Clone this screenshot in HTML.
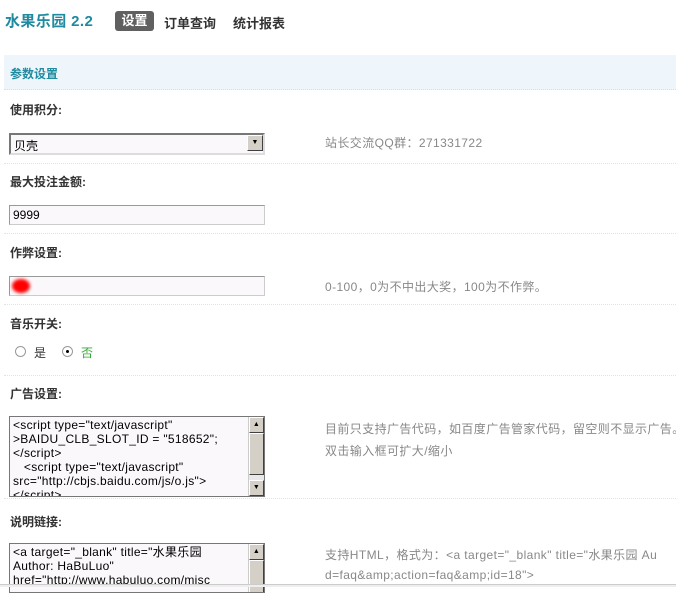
<!DOCTYPE html>
<html><head><meta charset="utf-8"><style>
*{margin:0;padding:0;box-sizing:border-box}
body{width:676px;height:587px;overflow:hidden;background:#fff;font-family:"Liberation Sans","Noto Sans CJK SC",sans-serif;font-size:12px;color:#333;position:relative}
.a{position:absolute;white-space:nowrap}
.lbl{font-weight:bold;font-size:12px;color:#333}
.hint{color:#888;font-size:12px;letter-spacing:0.4px}
.div{position:absolute;left:4px;right:0;height:1px;border-top:1px dotted #d5e6ee}
.inp{position:absolute;left:9px;width:256px;height:20px;border:1px solid #999;border-right-color:#ccc;border-bottom-color:#ccc;background:#fbf8fb;font-size:12px;padding:2px 3px;color:#000}
.ta{position:absolute;left:9px;width:256px;border:1px solid #777;background:#fbf8fb;font-size:12px;line-height:14px;padding:1px 3px;color:#000;overflow:hidden;white-space:nowrap;letter-spacing:0.3px}
.sb{position:absolute;right:0;top:0;bottom:0;width:16px;background:#e8e8e8;border-left:1px solid #ccc}
.btn{position:absolute;left:0;width:15px;height:16px;background:#d4d0c8;border:1px solid;border-color:#fff #404040 #404040 #fff;font-size:7px;text-align:center;line-height:14px;color:#000}
</style></head><body>
<div class="a" style="left:5px;top:10px;font-size:15px;font-weight:bold;color:#1f8aa0;letter-spacing:0.4px">水果乐园 2.2</div>
<div class="a" style="left:115px;top:11px;width:39px;height:20px;background:#606060;border-radius:3px;color:#fff;font-weight:bold;font-size:13px;text-align:center;line-height:20px">设置</div>
<div class="a" style="left:164px;top:13px;font-weight:bold;font-size:13px;color:#333">订单查询</div>
<div class="a" style="left:233px;top:13px;font-weight:bold;font-size:13px;color:#333">统计报表</div>
<div class="a" style="left:4px;top:55px;width:672px;height:35px;background:#eef6fb;border-bottom:1px dotted #cfe0ea"></div>
<div class="a" style="left:10px;top:65px;font-weight:bold;color:#1f8aa0">参数设置</div>

<div class="a lbl" style="left:10px;top:101px">使用积分:</div>
<div class="inp" style="top:133px;height:22px;border:2px solid #777;border-right-color:#ddd;border-bottom-color:#ddd">贝壳<div class="btn" style="left:auto;right:0;top:0;width:16px;height:16px">▼</div></div>
<div class="a hint" style="left:325px;top:134px">站长交流QQ群：271331722</div>
<div class="div" style="top:163px"></div>

<div class="a lbl" style="left:10px;top:173px">最大投注金额:</div>
<div class="inp" style="top:205px">9999</div>
<div class="div" style="top:233px"></div>

<div class="a lbl" style="left:10px;top:244px">作弊设置:</div>
<div class="inp" style="top:276px"><div style="position:absolute;left:2px;top:2px;width:18px;height:14px;border-radius:50%;background:#f00;filter:blur(1.5px)"></div></div>
<div class="a hint" style="left:325px;top:278px">0-100，0为不中出大奖，100为不作弊。</div>
<div class="div" style="top:304px"></div>

<div class="a lbl" style="left:10px;top:315px">音乐开关:</div>
<div class="a" style="left:15px;top:346px;width:11px;height:11px;border-radius:50%;border:1px solid #999;background:#fff"></div>
<div class="a" style="left:34px;top:344px">是</div>
<div class="a" style="left:62px;top:346px;width:11px;height:11px;border-radius:50%;border:1px solid #999;background:#fff"><div style="position:absolute;left:3px;top:3px;width:3px;height:3px;background:#000;border-radius:50%"></div></div>
<div class="a" style="left:81px;top:344px;color:#3a3">否</div>
<div class="div" style="top:375px"></div>

<div class="a lbl" style="left:10px;top:385px">广告设置:</div>
<div class="ta" style="top:416px;height:81px">&lt;script type="text/javascript"<br>&gt;BAIDU_CLB_SLOT_ID = "518652";<br>&lt;/script&gt;<br>&nbsp;&nbsp;&nbsp;&lt;script type="text/javascript"<br>src="http://cbjs.baidu.com/js/o.js"&gt;<br>&lt;/script&gt;
<div class="sb"><div class="btn" style="top:0">▲</div><div class="btn" style="top:16px;height:42px"></div><div class="btn" style="bottom:0">▼</div></div></div>
<div class="a hint" style="left:325px;top:420px">目前只支持广告代码，如百度广告管家代码，留空则不显示广告。</div>
<div class="a hint" style="left:325px;top:442px">双击输入框可扩大/缩小</div>
<div class="div" style="top:498px"></div>

<div class="a lbl" style="left:10px;top:513px">说明链接:</div>
<div class="ta" style="top:543px;height:50px">&lt;a target="_blank" title="水果乐园<br>Author: HaBuLuo"<br>href="http://www.habuluo.com/misc
<div class="sb"><div class="btn" style="top:0">▲</div><div class="btn" style="top:16px;height:40px"></div></div></div>
<div class="a hint" style="left:325px;top:546px">支持HTML，格式为：&lt;a target="_blank" title="水果乐园 Au</div>
<div class="a hint" style="left:325px;top:568px">d=faq&amp;amp;action=faq&amp;amp;id=18"&gt;</div>
<div class="a" style="left:0;top:584px;width:676px;height:3px;background:#eee;border-top:1px solid #ccc"></div>
</body></html>
